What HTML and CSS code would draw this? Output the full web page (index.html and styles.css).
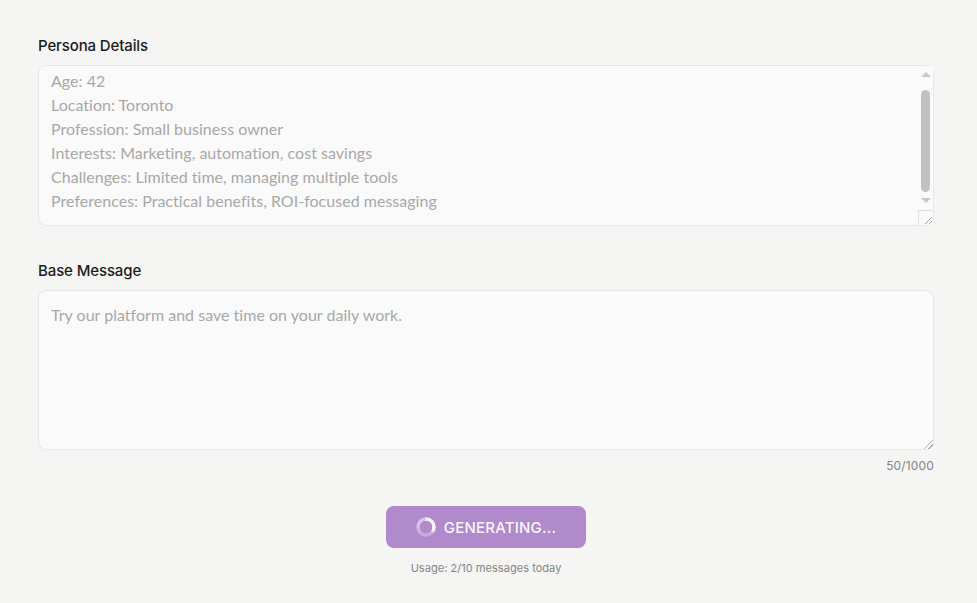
FILE: index.html
```html
<!DOCTYPE html>
<html>
<head>
  <title>Persona Message</title>
  <link rel="stylesheet" href="styles.css">
</head>
<body>
  <div class="form">
    <div class="field field-persona">
      <label class="field-label" for="persona">Persona Details</label>
      <div class="input-wrap">
        <textarea id="persona" class="field-input persona-input" disabled>Name: Alex Morgan
Age: 42
Location: Toronto
Profession: Small business owner
Interests: Marketing, automation, cost savings
Challenges: Limited time, managing multiple tools
Preferences: Practical benefits, ROI-focused messaging</textarea>
        <div class="scrollbar">
          <span class="arrow-up"></span>
          <span class="thumb"></span>
          <span class="arrow-down"></span>
          <span class="resizer">
            <svg width="14" height="14" viewBox="0 0 14 14">
              <path d="M6 13 L13 6 M10 13 L13 10" stroke="#a0a0a0" stroke-width="1" fill="none"/>
            </svg>
          </span>
        </div>
      </div>
    </div>
    <div class="field field-message">
      <label class="field-label" for="message">Base Message</label>
      <textarea id="message" class="field-input message-input" disabled>Try our platform and save time on your daily work.</textarea>
      <div class="counter">50/1000</div>
    </div>
    <div class="actions">
      <button class="generate" disabled>
        <span class="spinner"></span>
        GENERATING...
      </button>
      <div class="usage">Usage: 2/10 messages today</div>
    </div>
  </div>

  <script>
    const persona = document.getElementById('persona');
    persona.scrollTop = persona.scrollHeight;
  </script>
</body>
</html>
```

FILE: styles.css
```css
html, body {
  margin: 0;
  height: 100%;
}
body {
  font-family: Inter, "Open Sans", sans-serif;
  background-color: #f5f5f3;
  color: #1c1c1c;
}
.form {
  padding: 37px 43px 0 38px;
}
.field-persona {
  margin-bottom: 36px;
}
.field-message {
  margin-bottom: 33px;
}
.field-label {
  display: block;
  font-size: 15px;
  font-weight: 500;
  line-height: 18px;
  margin-bottom: 10px;
  letter-spacing: -0.12px;
}
.input-wrap {
  position: relative;
}
.field-input {
  display: block;
  box-sizing: border-box;
  width: 100%;
  padding: 12px;
  font-family: Lato, Inter, sans-serif;
  font-size: 16px;
  line-height: 24px;
  letter-spacing: 0.02px;
  color: #a8a8a8;
  background-color: #fafafa;
  border: 1px solid #e6e6ee;
  border-radius: 8px;
  resize: vertical;
  outline: none;
}
.persona-input {
  height: 161px;
  resize: none;
}
.message-input {
  height: 160px;
}
.message-input::-webkit-resizer {
  background: linear-gradient(135deg, transparent 67%, #adadad 67%, #adadad 72%, transparent 72%, transparent 83%, #adadad 83%, #adadad 88%, transparent 88%);
}
.scrollbar {
  position: absolute;
  top: 1px;
  right: 1px;
  bottom: 1px;
  width: 15px;
  display: flex;
  flex-direction: column;
  align-items: center;
  background-color: #fafafa;
}
.arrow-up {
  margin-top: 6px;
  border-left: 5px solid transparent;
  border-right: 5px solid transparent;
  border-bottom: 5px solid #c8c8c6;
}
.thumb {
  width: 9px;
  height: 102px;
  margin-top: 13px;
  background-color: #c1c1bf;
  border-radius: 5px;
}
.arrow-down {
  margin-top: 6px;
  border-left: 5px solid transparent;
  border-right: 5px solid transparent;
  border-top: 5px solid #c8c8c6;
}
.resizer {
  box-sizing: border-box;
  width: 15px;
  height: 15px;
  margin-top: auto;
  border-left: 1px solid #e2e2e2;
  border-top: 1px solid #e2e2e2;
}
.resizer svg {
  display: block;
}
.counter {
  margin-top: 8px;
  font-size: 12px;
  line-height: 15px;
  letter-spacing: 0.15px;
  text-align: right;
  color: #858585;
}
.actions {
  display: flex;
  flex-direction: column;
  align-items: center;
}
.generate {
  display: flex;
  align-items: center;
  justify-content: center;
  gap: 8px;
  width: 200px;
  height: 42px;
  padding: 0;
  font-family: inherit;
  font-size: 15px;
  font-weight: 500;
  letter-spacing: 0.2px;
  color: #faf6fc;
  background-color: #b08aca;
  border: none;
  border-radius: 8px;
}
.spinner {
  width: 20px;
  height: 20px;
  border-radius: 50%;
  background: conic-gradient(#f6f0fa 0deg, #f6f0fa 115deg, #c7aad9 135deg, #c7aad9 210deg, #d9c5e6 300deg, #d9c5e6 360deg);
  -webkit-mask: radial-gradient(circle, transparent 6px, #000 6.5px);
  mask: radial-gradient(circle, transparent 6px, #000 6.5px);
}
.usage {
  margin-top: 13px;
  font-size: 11px;
  line-height: 14px;
  letter-spacing: 0.04px;
  color: #858585;
}
```
